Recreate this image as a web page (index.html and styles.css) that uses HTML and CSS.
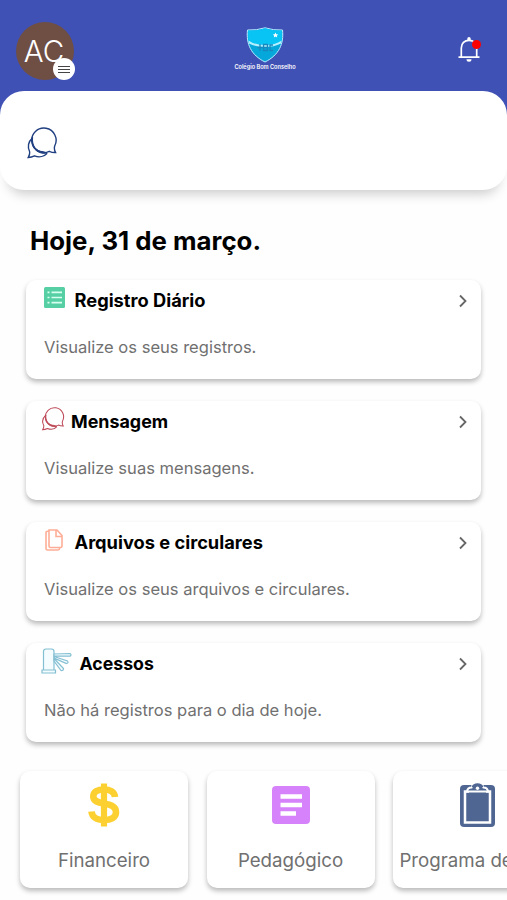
FILE: index.html
```html
<!DOCTYPE html>
<html lang="pt-BR">
<head>
<meta charset="utf-8">
<title>Colégio Bom Conselho</title>
<link rel="stylesheet" href="styles.css">
</head>
<body>
<svg class="defs" width="0" height="0">
  <symbol id="chat" viewBox="0 0 32 32">
    <path d="M6.3 11.5C2.5 15 1 20.500 3.700 25.500Q4 28 2.200 31Q5.500 30.700 8.500 29.300C13.500 31.300 18.500 29.800 21.200 26.800" fill="none" stroke="currentColor" stroke-width="1.400"/>
    <path d="M6.600 10.800C4 19 10 28.500 21 26.600L17.500 25.200C10 25 5.600 19 6.600 10.800Z" fill="currentColor" stroke="currentColor"/>
    <path d="M29.600 26Q27.700 22.500 28.700 19.500A12.200 12.200 0 1 0 23.200 24.800Q26.500 26.200 29.600 26Z" fill="none" stroke="currentColor" stroke-width="1.400"/>
  </symbol>
</svg>
<header class="topbar">
  <div class="avatar">AC
    <span class="avatar-menu"><i></i><i></i><i></i></span>
  </div>
  <div class="brand">
    <svg width="38" height="36" viewBox="0 0 38 36">
      <path d="M1.500 3Q10.500 3.500 19 .8Q27.500 3.500 36.500 3C38 17 33 28 19 35C5 28 0 17 1.500 3Z" fill="#06a8dc" stroke="#b9ecff"/>
      <path d="M2 3.500Q10.500 4 19 1.300Q27.500 4 36 3.500L35.700 14.500Q19 22 2.300 14.500Z" fill="#08c4f4"/>
      <path d="M2.300 13.500Q9 18 19 18Q29 18 35.700 13.500L35 16.500Q28 20 19 20Q10 20 3 16.500Z" fill="#b4f0ff"/>
      <path d="M29.500 5.500l.8 1.700 1.900.2-1.400 1.300.4 1.900-1.700-1-1.700 1 .4-1.900-1.400-1.300 1.900-.2z" fill="#fff"/>
      <path d="M14 17v7M11.500 20.500h5M17.500 17.500h4v6h-4zM17.500 20.500h4M27 18h-3v5.500h3" fill="none" stroke="#1688bd" stroke-width="1.300"/>
    </svg>
    <span>Colégio Bom Conselho</span>
  </div>
  <div class="bell">
    <svg width="24" height="28" viewBox="0 0 24 28">
      <path d="M4.300 20.500V12C4.300 7.500 7.500 4.300 12 4.300S19.700 7.500 19.700 12V20.500M1.500 21.200H22.500" fill="none" stroke="#fff" stroke-width="1.700"/>
      <path d="M10.300 4V2.800a1.700 1.700 0 0 1 3.400 0V4zM9.500 23.300h5a2.500 2.500 0 0 1-5 0z" fill="#fff"/>
    </svg>
    <b class="dot"></b>
  </div>
</header>
<section class="panel"><svg class="panel-chat" width="32" height="33"><use href="#chat"/></svg></section>
<main>
  <h1>Hoje, 31 de março.</h1>
  <div class="cards">
    <article class="card registro">
      <h2><svg width="21" height="21" viewBox="0 0 21 21"><rect width="21" height="21" rx="1.500" fill="#56cfa5"/><path d="M3.500 5.300h2M3.500 10.500h2M3.500 15.700h2M7.500 5.300h10.500M7.500 10.500h10.500M7.500 15.700h10.500" stroke="#d8fff0" stroke-width="1.700"/></svg><span>Registro Diário</span></h2>
      <p>Visualize os seus registros.</p>
      <svg class="chevron" width="10" height="14" viewBox="0 0 10 14"><path d="M2 1.500L7.500 7L2 12.500"/></svg>
    </article>
    <article class="card mensagem">
      <h2><svg width="24" height="25"><use href="#chat"/></svg><span>Mensagem</span></h2>
      <p>Visualize suas mensagens.</p>
      <svg class="chevron" width="10" height="14" viewBox="0 0 10 14"><path d="M2 1.500L7.500 7L2 12.500"/></svg>
    </article>
    <article class="card arquivos">
      <h2><svg width="18" height="22" viewBox="0 0 18 22"><path d="M4.200 1h7.800L17 6.500V17a1.500 1.500 0 0 1-1.500 1.500H5.500A1.500 1.500 0 0 1 4 17V1ZM11 1V7.500H17M4 2.200H2.500A1.500 1.500 0 0 0 1 3.700V19.500A1.500 1.500 0 0 0 2.500 21H13Q14.500 21 14.700 19" fill="none" stroke="#ffad97" stroke-width="1.600"/></svg><span>Arquivos e circulares</span></h2>
      <p>Visualize os seus arquivos e circulares.</p>
      <svg class="chevron" width="10" height="14" viewBox="0 0 10 14"><path d="M2 1.500L7.500 7L2 12.500"/></svg>
    </article>
    <article class="card acessos">
      <h2><svg width="31" height="26" viewBox="0 0 31 26"><g fill="#f4fcff" stroke="#83bfd3" stroke-width="1.200"><path d="M2.500 22V3.500Q2.500 1 5 1H10.500Q13 1 13 3.500V22ZM1 22H14.500V25H1Z"/><path d="M13 6L29 5.500Q31 7 29 8.200L13 8ZM13 8.500L26.500 13Q28 15 25.500 15.500L13 10ZM13 10.500L22.500 20.500Q22.500 23 20 22.500L13 13Z"/></g></svg><span>Acessos</span></h2>
      <p>Não há registros para o dia de hoje.</p>
      <svg class="chevron" width="10" height="14" viewBox="0 0 10 14"><path d="M2 1.500L7.500 7L2 12.500"/></svg>
    </article>
  </div>
</main>
<nav class="tiles">
  <a class="tile"><span class="tile-icon"><svg width="32" height="44" viewBox="0 0 32 44"><path d="M27 14C26.500 9 22 6.500 16 6.500C10 6.500 5.300 8.700 5.300 13.500C5.300 24 28 17 28 29.300C28 34.500 23 37 16 37C8.500 37 4 34 3.500 28.500" fill="none" stroke="#fdd032" stroke-width="6.600"/><path d="M16 .5V43.500" stroke="#fdd032" stroke-width="6.200"/></svg></span><span class="label">Financeiro</span></a>
  <a class="tile"><span class="tile-icon"><svg width="38" height="38" viewBox="0 0 38 38"><rect width="38" height="38" rx="4" fill="#d682fb"/><path d="M8.500 10.500H30M8.500 19H30M8.500 27.500H24" stroke="#fff" stroke-width="4.600"/></svg></span><span class="label">Pedagógico</span></a>
  <a class="tile"><span class="tile-icon"><svg width="35" height="44" viewBox="0 0 35 44"><rect y="2" width="35" height="42" rx="4" fill="#4f6693"/><path d="M9 8.500H5V39.500H30V8.500H26" fill="none" stroke="#fff" stroke-width="2.500"/><path d="M7 8.500Q7.500 4.500 11.500 4.500Q13 0 17.500 0T23.500 4.500Q27.500 4.500 28 8.500Z" fill="#4f6693" stroke="#fff" stroke-width="2"/><path d="M11.500 4Q13 .3 17.500 .3T23.500 4Z" fill="#4f6693"/><circle cx="17.500" cy="5.200" r="1.700" fill="#fff"/></svg></span><span class="label">Programa de aula</span></a>
</nav>
</body>
</html>
```

FILE: styles.css
```css
* { box-sizing: border-box; }
html, body { height: 100%; overflow: hidden; }
body { margin: 0; background: #fefefe; font-family: Inter, "Liberation Sans", sans-serif; color: #000; }
svg { display: block; flex: none; }
.defs { position: absolute; }
.topbar { height: 121px; padding: 22px 26px 0 16px; background: #3f51b5; display: flex; justify-content: space-between; align-items: flex-start; }
.avatar { position: relative; width: 58px; height: 58px; padding-right: 2px; border-radius: 50%; background: #6f4e44; color: #fff; font-size: 29.500px; font-weight: 350; line-height: 58px; text-align: center; }
.avatar-menu { position: absolute; right: -1px; bottom: 0; width: 22px; height: 22px; border-radius: 50%; background: #fff; display: flex; flex-direction: column; align-items: center; justify-content: center; gap: 2px; }
.avatar-menu i { width: 12px; height: 1px; background: #444; }
.brand { margin: 5px 0 0 -1px; width: 80px; display: flex; flex-direction: column; align-items: center; color: #fff; font: 600 5.600px/8px Inter, sans-serif; white-space: nowrap; }
.bell { position: relative; margin-top: 14px; }
.dot { position: absolute; right: 0; top: 4px; width: 9px; height: 9px; border-radius: 50%; background: #f00; }
.panel { height: 99px; margin-top: -30px; padding: 35px 26px; border-radius: 24px; background: #fff; box-shadow: 0 12px 12px -8px #0003; }
.panel-chat { color: #203f80; }
main { padding: 0 26px; }
h1 { margin: 34px 0 0 4px; font-size: 25.800px; line-height: 34px; font-weight: 700; letter-spacing: 0; white-space: nowrap; }
.cards { margin-top: 22px; display: grid; gap: 22px; }
.card { position: relative; height: 99px; padding: 0 18px; border-radius: 10px; background: #fff; box-shadow: 0 3px 5px #0004; white-space: nowrap; }
h2 { margin: 0; height: 40px; display: flex; align-items: center; font-size: 18.250px; font-weight: 650; }
h2 svg { margin-top: -5px; }
h2 span { margin-left: 9.500px; }
.mensagem h2 { margin-left: -3px; }
.mensagem h2 svg { color: #bd4a58; }
.mensagem h2 span { margin-left: 6px; font-size: 17.900px; }
.arquivos h2 { margin-left: 1px; }
.arquivos h2 span { margin-left: 11.500px; }
.acessos h2 { margin-left: -3px; }
.acessos h2 span { margin-left: 7.500px; font-size: 17.700px; }
.card p { margin: 15px 0 0; font-size: 16.550px; line-height: 24px; color: #707070; }
.chevron { position: absolute; right: 13px; top: 14px; fill: none; stroke: #666; stroke-width: 1.800; }
.tiles { display: flex; gap: 18.500px; margin: 29px 0 0 20px; }
.tile { flex: none; width: 168px; height: 117px; border-radius: 10px; background: #fff; box-shadow: 0 3px 5px #0004; display: flex; flex-direction: column; align-items: center; color: #707070; }
.tile-icon { height: 68px; display: flex; align-items: center; }
.label { margin-top: 9px; font-size: 18.700px; line-height: 26px; white-space: nowrap; }
```
